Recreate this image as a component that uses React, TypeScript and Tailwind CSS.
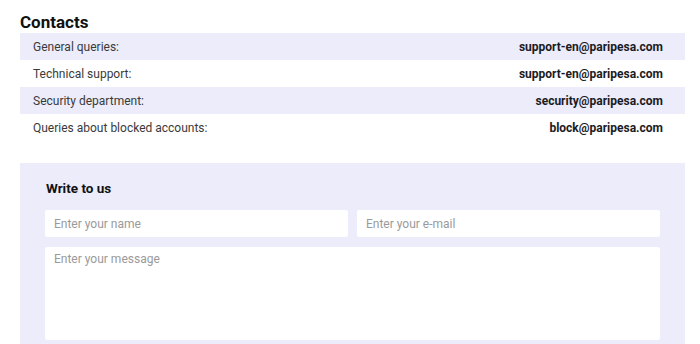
import React from "react";

const rows = [
  { label: "General queries:", email: "support-en@paripesa.com", shaded: true },
  { label: "Technical support:", email: "support-en@paripesa.com", shaded: false },
  { label: "Security department:", email: "security@paripesa.com", shaded: true },
  { label: "Queries about blocked accounts:", email: "block@paripesa.com", shaded: false },
];

export default function App() {
  return (
    <div
      className="w-[700px] h-[344px] overflow-hidden bg-white pl-[20px] pr-[15px] pt-[11px]"
      style={{ fontFamily: "Roboto, 'Liberation Sans', sans-serif" }}
    >
      <h2 className="text-[17px] leading-[22px] font-bold text-[#111]">Contacts</h2>
      <div className="flex flex-col">
        {rows.map((r) => (
          <div
            key={r.label}
            className={`flex h-[27px] items-center justify-between pl-[13px] pr-[22px] text-[12px] ${
              r.shaded ? "bg-[#ececfb]" : "bg-white"
            }`}
          >
            <span className="text-[#3a3a3a]">{r.label}</span>
            <span className="font-bold text-[#1b1b24]">{r.email}</span>
          </div>
        ))}
      </div>
      <div className="mt-[22px] bg-[#ececfb] px-[25px] pt-[15px] pb-[10px]">
        <h3 className="text-[13.5px] leading-[21px] font-bold text-[#111] mb-[11px] pl-px">Write to us</h3>
        <div className="flex gap-[9px]">
          <input
            className="flex-1 h-[27px] min-w-0 rounded-[2px] bg-white px-[9px] text-[12px] text-[#333] placeholder:text-[#9a9a9a] outline-none"
            placeholder="Enter your name"
          />
          <input
            className="flex-1 h-[27px] min-w-0 rounded-[2px] bg-white px-[9px] text-[12px] text-[#333] placeholder:text-[#9a9a9a] outline-none"
            placeholder="Enter your e-mail"
          />
        </div>
        <textarea
          className="mt-[10px] block w-full h-[93px] resize-none rounded-[2px] bg-white px-[9px] pt-[3px] text-[12px] text-[#333] placeholder:text-[#9a9a9a] outline-none"
          placeholder="Enter your message"
        />
      </div>
    </div>
  );
}
